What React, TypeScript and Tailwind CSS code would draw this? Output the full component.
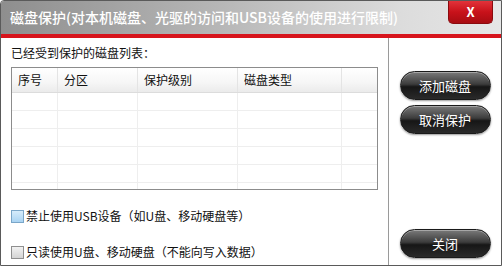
const cols = [
  { label: '序号', w: 'w-[46px]' },
  { label: '分区', w: 'w-[80px]' },
  { label: '保护级别', w: 'w-[100px]' },
  { label: '磁盘类型', w: 'w-[104px]' },
  { label: '', w: 'flex-1' },
];

function DarkButton({ children, className = '' }: { children: string; className?: string }) {
  return (
    <button
      type="button"
      className={`w-[91px] h-[29px] rounded-full border border-[#1a1a1a] bg-[linear-gradient(to_bottom,#7a7a7a_0%,#3c3c3c_45%,#161616_55%,#2a2a2a_100%)] text-white text-[13px] shadow-[inset_0_1px_0_rgba(255,255,255,0.35),0_1px_2px_rgba(0,0,0,0.4)] ${className}`}
    >
      {children}
    </button>
  );
}

export default function App() {
  const rows = [0, 1, 2, 3, 4, 5];
  return (
    <div
      className="w-[502px] h-[266px] bg-white flex flex-col border border-[#5a5a5a] rounded-tl-[4px] overflow-hidden text-[#111]"
      style={{ fontFamily: '"Noto Sans CJK SC", "Noto Sans", sans-serif' }}
    >
      <div className="h-[33px] flex items-start justify-between bg-[linear-gradient(to_right,#8e8e8e_0%,#b8b8b8_45%,#dcdcdc_80%,#e6e6e6_100%)]">
        <div className="h-full flex items-center pl-[9px] text-white text-[14px] font-medium">
          磁盘保护(对本机磁盘、光驱的访问和USB设备的使用进行限制)
        </div>
        <div className="mr-[8px] w-[45px] h-[23px] rounded-b-[5px] bg-[linear-gradient(to_bottom,#e2333a_0%,#c8121a_50%,#a80c12_100%)] border border-t-0 border-[#8a0a0e] flex items-center justify-center text-white text-[13px] font-bold">
          X
        </div>
      </div>
      <div className="h-[4px] bg-[#d7141c]" />
      <div className="flex-1 flex">
        <div className="w-[388px] border-r border-[#9a9a9a] pl-[10px] pr-[10px] flex flex-col">
          <div className="mt-[7px] text-[12px] leading-[16px]">已经受到保护的磁盘列表：</div>
          <div className="mt-[6px] h-[123px] w-[367px] border border-[#8c8c8c] overflow-hidden">
            <div className="h-[25px] flex bg-[linear-gradient(to_bottom,#ffffff_0%,#f6f6f6_60%,#ebebeb_100%)] border-b border-[#dcdcdc]">
              {cols.map((c, i) => (
                <div
                  key={i}
                  className={`${c.w} h-full flex items-center pl-[6px] text-[12px] ${i < cols.length - 1 ? 'border-r border-[#e4e4e4]' : ''}`}
                >
                  {c.label}
                </div>
              ))}
            </div>
            {rows.map((r) => (
              <div key={r} className="h-[18px] flex border-b border-[#eeeeee]">
                {cols.map((c, i) => (
                  <div key={i} className={`${c.w} h-full ${i < cols.length - 1 ? 'border-r border-[#eeeeee]' : ''}`} />
                ))}
              </div>
            ))}
          </div>
          <div className="mt-[17px] flex items-center text-[12px]">
            <span className="w-[13px] h-[13px] border border-[#7aa6c8] bg-[linear-gradient(to_bottom,#d6ecfb,#a9d3f2)] mr-[2px]" />
            禁止使用USB设备（如U盘、移动硬盘等）
          </div>
          <div className="mt-[18px] flex items-center text-[12px]">
            <span className="w-[13px] h-[13px] border border-[#8f8f8f] bg-[linear-gradient(to_bottom,#f2f2f2,#d4d4d4)] mr-[2px]" />
            只读使用U盘、移动硬盘（不能向写入数据）
          </div>
        </div>
        <div className="flex-1 flex flex-col items-center pt-[33px] pb-[7px]">
          <DarkButton>添加磁盘</DarkButton>
          <DarkButton className="mt-[5px]">取消保护</DarkButton>
          <DarkButton className="mt-auto">关闭</DarkButton>
        </div>
      </div>
    </div>
  );
}
